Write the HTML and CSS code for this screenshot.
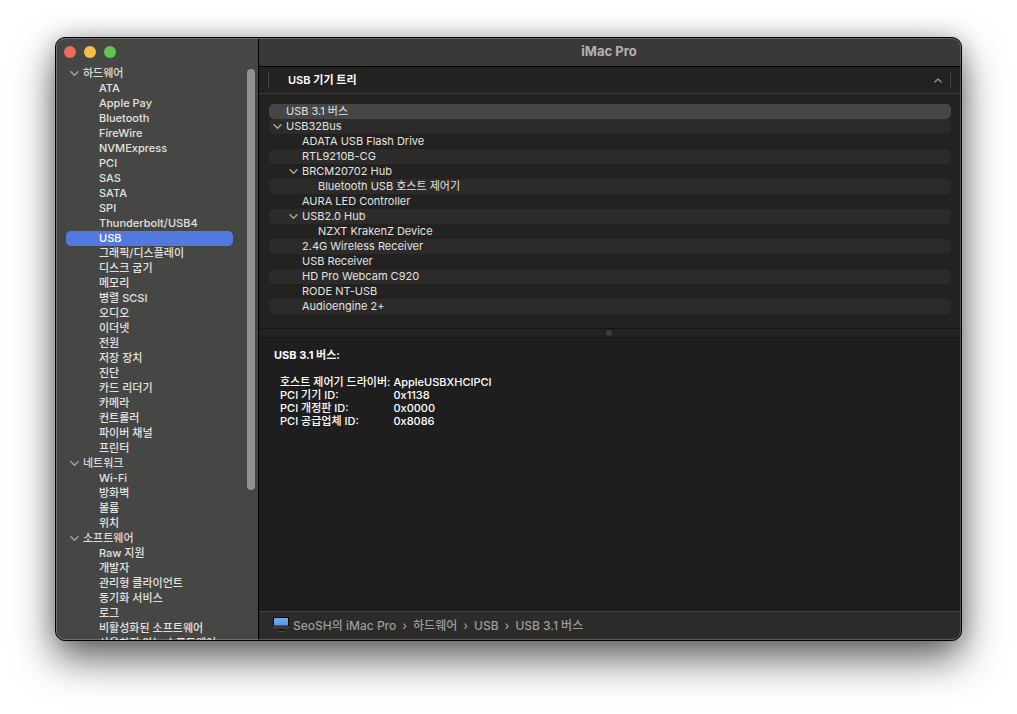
FILE: index.html
```html
<!DOCTYPE html>
<html lang="ko">
<head>
<meta charset="utf-8">
<meta name="viewport" content="width=device-width, initial-scale=1">
<title>iMac Pro</title>
<link rel="stylesheet" href="styles.css">
</head>
<body>
<svg class="defs" aria-hidden="true">
  <symbol id="chevron" viewBox="0 0 9 5"><path d="M1 .8 4.500 4.200 8 .8" fill="none" stroke="currentColor" stroke-width="1.500" stroke-linecap="round" stroke-linejoin="round"/></symbol>
</svg>
<div class="window">
  <aside class="sidebar">
    <div class="traffic">
      <button class="light close" aria-label="닫기"></button>
      <button class="light minimize" aria-label="최소화"></button>
      <button class="light zoom" aria-label="확대/축소"></button>
    </div>
    <nav class="categories" aria-label="카테고리">
      <div class="group"><button class="toggle" aria-label="접기"><svg class="chevron"><use href="#chevron"/></svg></button>하드웨어</div>
      <ul class="items">
        <li><a href="#">ATA</a></li>
        <li><a href="#">Apple Pay</a></li>
        <li><a href="#">Bluetooth</a></li>
        <li><a href="#">FireWire</a></li>
        <li><a href="#">NVMExpress</a></li>
        <li><a href="#">PCI</a></li>
        <li><a href="#">SAS</a></li>
        <li><a href="#">SATA</a></li>
        <li><a href="#">SPI</a></li>
        <li><a href="#">Thunderbolt/USB4</a></li>
        <li><a href="#" class="current" aria-current="true">USB</a></li>
        <li><a href="#">그래픽/디스플레이</a></li>
        <li><a href="#">디스크 굽기</a></li>
        <li><a href="#">메모리</a></li>
        <li><a href="#">병렬 SCSI</a></li>
        <li><a href="#">오디오</a></li>
        <li><a href="#">이더넷</a></li>
        <li><a href="#">전원</a></li>
        <li><a href="#">저장 장치</a></li>
        <li><a href="#">진단</a></li>
        <li><a href="#">카드 리더기</a></li>
        <li><a href="#">카메라</a></li>
        <li><a href="#">컨트롤러</a></li>
        <li><a href="#">파이버 채널</a></li>
        <li><a href="#">프린터</a></li>
      </ul>
      <div class="group"><button class="toggle" aria-label="접기"><svg class="chevron"><use href="#chevron"/></svg></button>네트워크</div>
      <ul class="items">
        <li><a href="#">Wi-Fi</a></li>
        <li><a href="#">방화벽</a></li>
        <li><a href="#">볼륨</a></li>
        <li><a href="#">위치</a></li>
      </ul>
      <div class="group"><button class="toggle" aria-label="접기"><svg class="chevron"><use href="#chevron"/></svg></button>소프트웨어</div>
      <ul class="items">
        <li><a href="#">Raw 지원</a></li>
        <li><a href="#">개발자</a></li>
        <li><a href="#">관리형 클라이언트</a></li>
        <li><a href="#">동기화 서비스</a></li>
        <li><a href="#">로그</a></li>
        <li><a href="#">비활성화된 소프트웨어</a></li>
        <li><a href="#">사용하지 않는 소프트웨어</a></li>
      </ul>
    </nav>
    <div class="scroller"></div>
  </aside>
  <main class="main">
    <header class="titlebar"><h1>iMac Pro</h1></header>
    <section class="tree-pane">
      <table class="tree">
        <thead>
          <tr><th scope="col"><button class="sort"><span>USB 기기 트리</span><svg class="chevron up"><use href="#chevron"/></svg></button></th></tr>
        </thead>
        <tbody>
          <tr class="selected"><td><div class="node">USB 3.1 버스</div></td></tr>
          <tr><td><div class="node"><button class="toggle" aria-label="접기"><svg class="chevron"><use href="#chevron"/></svg></button>USB32Bus</div></td></tr>
          <tr><td><div class="node level-1">ADATA USB Flash Drive</div></td></tr>
          <tr><td><div class="node level-1">RTL9210B-CG</div></td></tr>
          <tr><td><div class="node level-1"><button class="toggle" aria-label="접기"><svg class="chevron"><use href="#chevron"/></svg></button>BRCM20702 Hub</div></td></tr>
          <tr><td><div class="node level-2">Bluetooth USB 호스트 제어기</div></td></tr>
          <tr><td><div class="node level-1">AURA LED Controller</div></td></tr>
          <tr><td><div class="node level-1"><button class="toggle" aria-label="접기"><svg class="chevron"><use href="#chevron"/></svg></button>USB2.0 Hub</div></td></tr>
          <tr><td><div class="node level-2">NZXT KrakenZ Device</div></td></tr>
          <tr><td><div class="node level-1">2.4G Wireless Receiver</div></td></tr>
          <tr><td><div class="node level-1">USB Receiver</div></td></tr>
          <tr><td><div class="node level-1">HD Pro Webcam C920</div></td></tr>
          <tr><td><div class="node level-1">RODE NT-USB</div></td></tr>
          <tr><td><div class="node level-1">Audioengine 2+</div></td></tr>
        </tbody>
      </table>
    </section>
    <div class="splitter" role="separator"><span class="grip"></span></div>
    <section class="details">
      <h2>USB 3.1 버스:</h2>
      <table class="facts">
        <tr><th scope="row">호스트 제어기 드라이버:</th><td>AppleUSBXHCIPCI</td></tr>
        <tr><th scope="row">PCI 기기 ID:</th><td>0x1138</td></tr>
        <tr><th scope="row">PCI 개정판 ID:</th><td>0x0000</td></tr>
        <tr><th scope="row">PCI 공급업체 ID:</th><td>0x8086</td></tr>
      </table>
    </section>
    <nav class="path" aria-label="경로">
      <svg class="imac" viewBox="0 0 16 16" aria-hidden="true">
        <rect width="16" height="12" rx=".5" fill="#090a0c"/>
        <rect x="1" y="1" width="14" height="7.500" fill="#5b9be2"/>
        <path d="M1 1h14v3L1 6z" fill="#6ca6ea"/>
        <rect y="9" width="16" height="3" fill="#3b3b3b"/>
        <path d="M6 12h4l.5 2h-5z" fill="#151515"/>
        <rect x="5" y="14" width="6" height="1" fill="#4c4c4c"/>
      </svg>
      <a href="#">SeoSH의 iMac Pro</a><span class="sep">›</span><a href="#">하드웨어</a><span class="sep">›</span><a href="#">USB</a><span class="sep">›</span><a href="#">USB 3.1 버스</a>
    </nav>
  </main>
</div>
</body>
</html>
```
FILE: styles.css
```css
* { box-sizing: border-box; }

body {
  margin: 0;
  height: 100vh;
  padding: 37px 55px 73px;
  display: flex;
  background: #fff;
  color: #e2e2e1;
  font: 11px/15px Inter, "Noto Sans CJK KR", sans-serif;
}

h1, h2, ul { margin: 0; padding: 0; }
ul { list-style: none; }
a { color: inherit; text-decoration: none; }
button { margin: 0; padding: 0; border: 0; background: none; color: inherit; font: inherit; }
table { border-collapse: collapse; }
th, td { padding: 0; text-align: left; }

.defs { position: absolute; width: 0; height: 0; }

.window {
  position: relative;
  flex: 1;
  display: flex;
  border: 1px solid #000;
  border-radius: 10px;
  background: #1e1e1e;
  box-shadow: 0 18px 40px rgba(0, 0, 0, .6), 0 0 22px rgba(0, 0, 0, .2);
}

/* Light edge drawn over every pane */
.window::after {
  content: "";
  position: absolute;
  inset: 0;
  border: 1px solid rgba(255, 255, 255, .22);
  border-radius: 9px;
  pointer-events: none;
}

.sidebar {
  position: relative;
  width: 203px;
  flex: none;
  display: flex;
  flex-direction: column;
  overflow: hidden;
  border-right: 1px solid #000;
  border-radius: 9px 0 0 9px;
  background: #464644;
}

.traffic { flex: none; display: flex; gap: 8px; height: 28px; padding: 8px 8px 0; }
.light { width: 12px; height: 12px; border-radius: 50%; }
.close { background: #ec6a5e; }
.minimize { background: #f4bf4f; }
.zoom { background: #61c454; }

.categories { flex: 1; min-height: 0; overflow: hidden; padding: 0 25px 0 10px; font-weight: 500; }
.group { display: flex; height: 15px; padding-left: 4px; color: #dcdcdb; }
.items a { display: block; height: 15px; padding-left: 33px; border-radius: 5px; white-space: nowrap; }
.items .current { background: #5179e0; color: #fff; }

.toggle { width: 13px; height: 15px; display: flex; align-items: center; color: #a4a4a3; }
.chevron { width: 9px; height: 5px; }

.scroller {
  position: absolute;
  top: 31px;
  right: 3px;
  width: 8px;
  height: 70%;
  border-radius: 4px;
  background: #919190;
}

.main { flex: 1; min-width: 0; display: flex; flex-direction: column; overflow: hidden; border-radius: 0 9px 9px 0; }

.titlebar {
  flex: none;
  display: flex;
  align-items: center;
  justify-content: center;
  height: 29px;
  padding: 0 2px 2px 0;
  border-bottom: 1px solid #000;
  background: #3a3937;
}
.titlebar h1 { font-size: 13px; line-height: 16px; font-weight: 700; color: #b2b2b1; }

.tree-pane { flex: none; padding-bottom: 14px; background: #232220; }
.tree { width: 100%; }
.tree th { padding: 5px 10px 5px 9px; border-bottom: 1px solid #3d3c3b; }
.sort {
  width: 100%;
  height: 16px;
  display: flex;
  align-items: center;
  justify-content: space-between;
  padding: 0 8px 0 19px;
  border: 1px solid #454443;
  border-width: 0 1px;
  color: #fff;
  font-weight: 600;
}
.up { width: 8px; transform: rotate(180deg); color: #90908f; }
.tree td { padding: 0 10px; }
.tree tbody::before { content: ""; display: block; height: 10px; }
.node { display: flex; height: 15px; padding-left: 17px; border-radius: 5px; }
.tree tr:nth-child(even) .node { background: #2c2b2a; }
.tree .selected .node { background: #464646; }
.tree .level-1 { padding-left: 33px; }
.tree .level-2 { padding-left: 49px; }
.node .toggle { margin-left: -13px; }

.splitter {
  flex: none;
  display: flex;
  align-items: center;
  justify-content: center;
  height: 10px;
  padding-right: 2px;
  border: 1px solid #161616;
  border-width: 1px 0;
  background: #222;
}
.grip { width: 6px; height: 6px; border-radius: 50%; background: #3c3c3c; }

.details { flex: 1; padding: 10px 15px; color: #fff; }
.details h2 { font-size: 11px; line-height: 15px; font-weight: 700; }
.facts { margin: 13px 0 0 6px; font-weight: 500; line-height: 13px; }
.facts th { padding-right: 3px; font-weight: 500; white-space: nowrap; }
.facts tr { height: 13px; }

.path {
  flex: none;
  display: flex;
  align-items: center;
  height: 29px;
  padding: 0 0 2px 14px;
  border-top: 1px solid #454443;
  background: #2c2b29;
  color: #9c9c9b;
  font-size: 12px;
  font-weight: 500;
}
.imac { width: 16px; height: 16px; margin-right: 4px; }
.sep { padding: 0 6px; }
```
